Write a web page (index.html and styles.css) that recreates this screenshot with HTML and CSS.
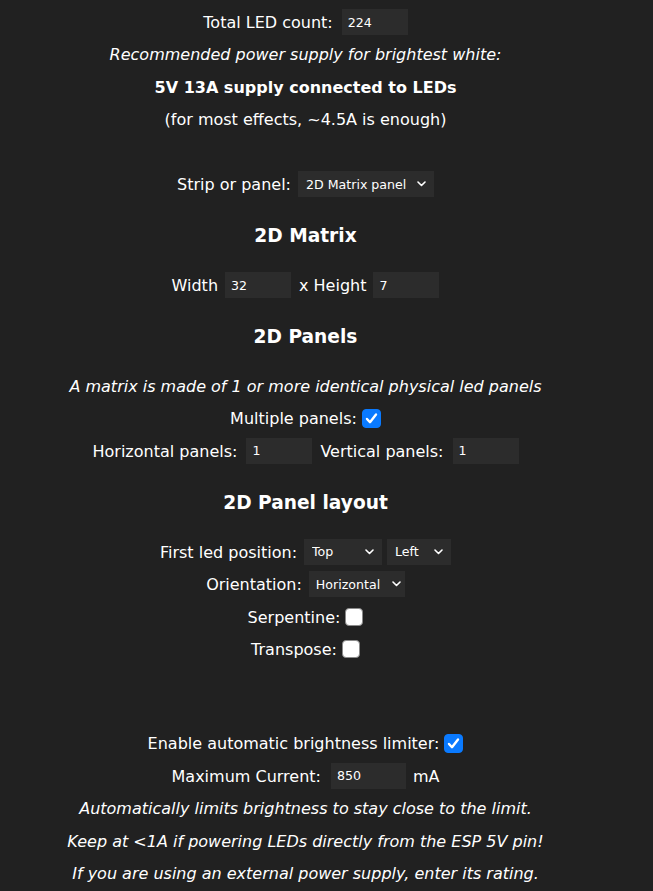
FILE: index.html
```html
<!DOCTYPE html>
<html lang="en">
  <head>
    <meta charset="UTF-8" />
    <meta name="viewport" content="width=device-width, initial-scale=1.0" />
    <title>LED Preferences</title>
    <link rel="stylesheet" href="styles.css">
  </head>
  <body>
    <div class="page">
      <div class="row">Total LED count:<input class="num w66" type="text" value="224"></div>
      <div class="row"><i>Recommended power supply for brightest white:</i></div>
      <div class="row"><b>5V 13A supply connected to LEDs</b></div>
      <div class="row">(for most effects, ~4.5A is enough)</div>
      <div class="row blank"></div>

      <div class="row">Strip or panel:<select class="sel w136"><option>2D Matrix panel</option><option>1D Strip</option></select></div>

      <h3>2D Matrix</h3>
      <div class="row">Width<input class="num w66 tight" type="text" value="32"><span class="gap">x Height</span><input class="num w66 tight" type="text" value="7"></div>

      <h3>2D Panels</h3>
      <div class="row"><i>A matrix is made of 1 or more identical physical led panels</i></div>
      <div class="row">Multiple panels:<input class="cb" type="checkbox" checked></div>
      <div class="row">Horizontal panels:<input class="num w66" type="text" value="1"><span class="gap">Vertical panels:</span><input class="num w66" type="text" value="1"></div>

      <h3>2D Panel layout</h3>
      <div class="row">First led position:<select class="sel w78"><option>Top</option><option>Bottom</option></select><select class="sel w64 near"><option>Left</option><option>Right</option></select></div>
      <div class="row">Orientation:<select class="sel w96"><option>Horizontal</option><option>Vertical</option></select></div>
      <div class="row">Serpentine:<input class="cb" type="checkbox"></div>
      <div class="row">Transpose:<input class="cb" type="checkbox"></div>
      <div class="spacer"></div>

      <div class="row">Enable automatic brightness limiter:<input class="cb" type="checkbox" checked></div>
      <div class="row">Maximum Current:<input class="num w75" type="text" value="850"><span class="unit">mA</span></div>
      <div class="row"><i>Automatically limits brightness to stay close to the limit.</i></div>
      <div class="row"><i>Keep at &lt;1A if powering LEDs directly from the ESP 5V pin!</i></div>
      <div class="row"><i>If you are using an external power supply, enter its rating.</i></div>
    </div>
  </body>
</html>
```

FILE: styles.css
```css
/* ページ全体 */
body {
  margin: 0;
  background: #212121;
  color: #fff;
  font-family: "DejaVu Sans", Verdana, sans-serif;
  font-size: 16px;
}

.page {
  width: 611px;
  padding-top: 7px;
  text-align: center;
}

.row {
  line-height: 32.4px;
  white-space: nowrap;
}

.blank {
  height: 32.4px;
}

/* 隠れた設定項目の分の余白 */
.spacer {
  height: 62px;
}

h3 {
  font-size: 18.6px;
  line-height: 37px;
  margin: 15.8px 0;
}

b {
  font-weight: bold;
}

/* 入力欄 */
input,
select {
  font-family: "DejaVu Sans", Verdana, sans-serif;
  font-size: 12.6px;
  color: #fff;
  background: #2c2c2c;
  border: none;
  outline: none;
  vertical-align: middle;
  box-sizing: border-box;
}

.num {
  height: 26px;
  padding: 0 6px;
  margin-left: 9px;
  margin-top: -3px;
}

.sel {
  height: 26px;
  padding: 0 18px 0 8px;
  margin-left: 7px;
  margin-top: -3px;
  text-align: left;
  appearance: none;
  -webkit-appearance: none;
  background-image: url("data:image/svg+xml;utf8,<svg xmlns='http://www.w3.org/2000/svg' width='9' height='6' viewBox='0 0 9 6'><path d='M1 1l3.5 3.5L8 1' fill='none' stroke='white' stroke-width='1.6' stroke-linecap='round' stroke-linejoin='round'/></svg>");
  background-repeat: no-repeat;
  background-position: right 8px center;
}

.near {
  margin-left: 5px;
}

.tight {
  margin-left: 7px;
}

.w66 { width: 66px; }
.w75 { width: 75px; margin-left: 10px; }
.w64 { width: 64px; }
.w78 { width: 78px; }
.w96 { width: 96px; padding: 0 13px 0 7px; background-position: right 4px center; }
.w136 { width: 136px; }

.gap {
  margin-left: 8px;
}

.unit {
  margin-left: 7px;
}

/* チェックボックス */
.cb {
  appearance: none;
  -webkit-appearance: none;
  width: 18px;
  height: 18px;
  margin: -3px 0 0 5px;
  border-radius: 4px;
  background: #fff;
  border: 1px solid #8a8a8a;
}

.cb:checked {
  width: 19px;
  height: 19px;
  background: #0a7aff url("data:image/svg+xml;utf8,<svg xmlns='http://www.w3.org/2000/svg' width='19' height='19' viewBox='0 0 19 19'><path d='M5 10l3 3.2L14 5.5' fill='none' stroke='white' stroke-width='2.4' stroke-linecap='round' stroke-linejoin='round'/></svg>") no-repeat center;
  border-color: #0a7aff;
}
```
